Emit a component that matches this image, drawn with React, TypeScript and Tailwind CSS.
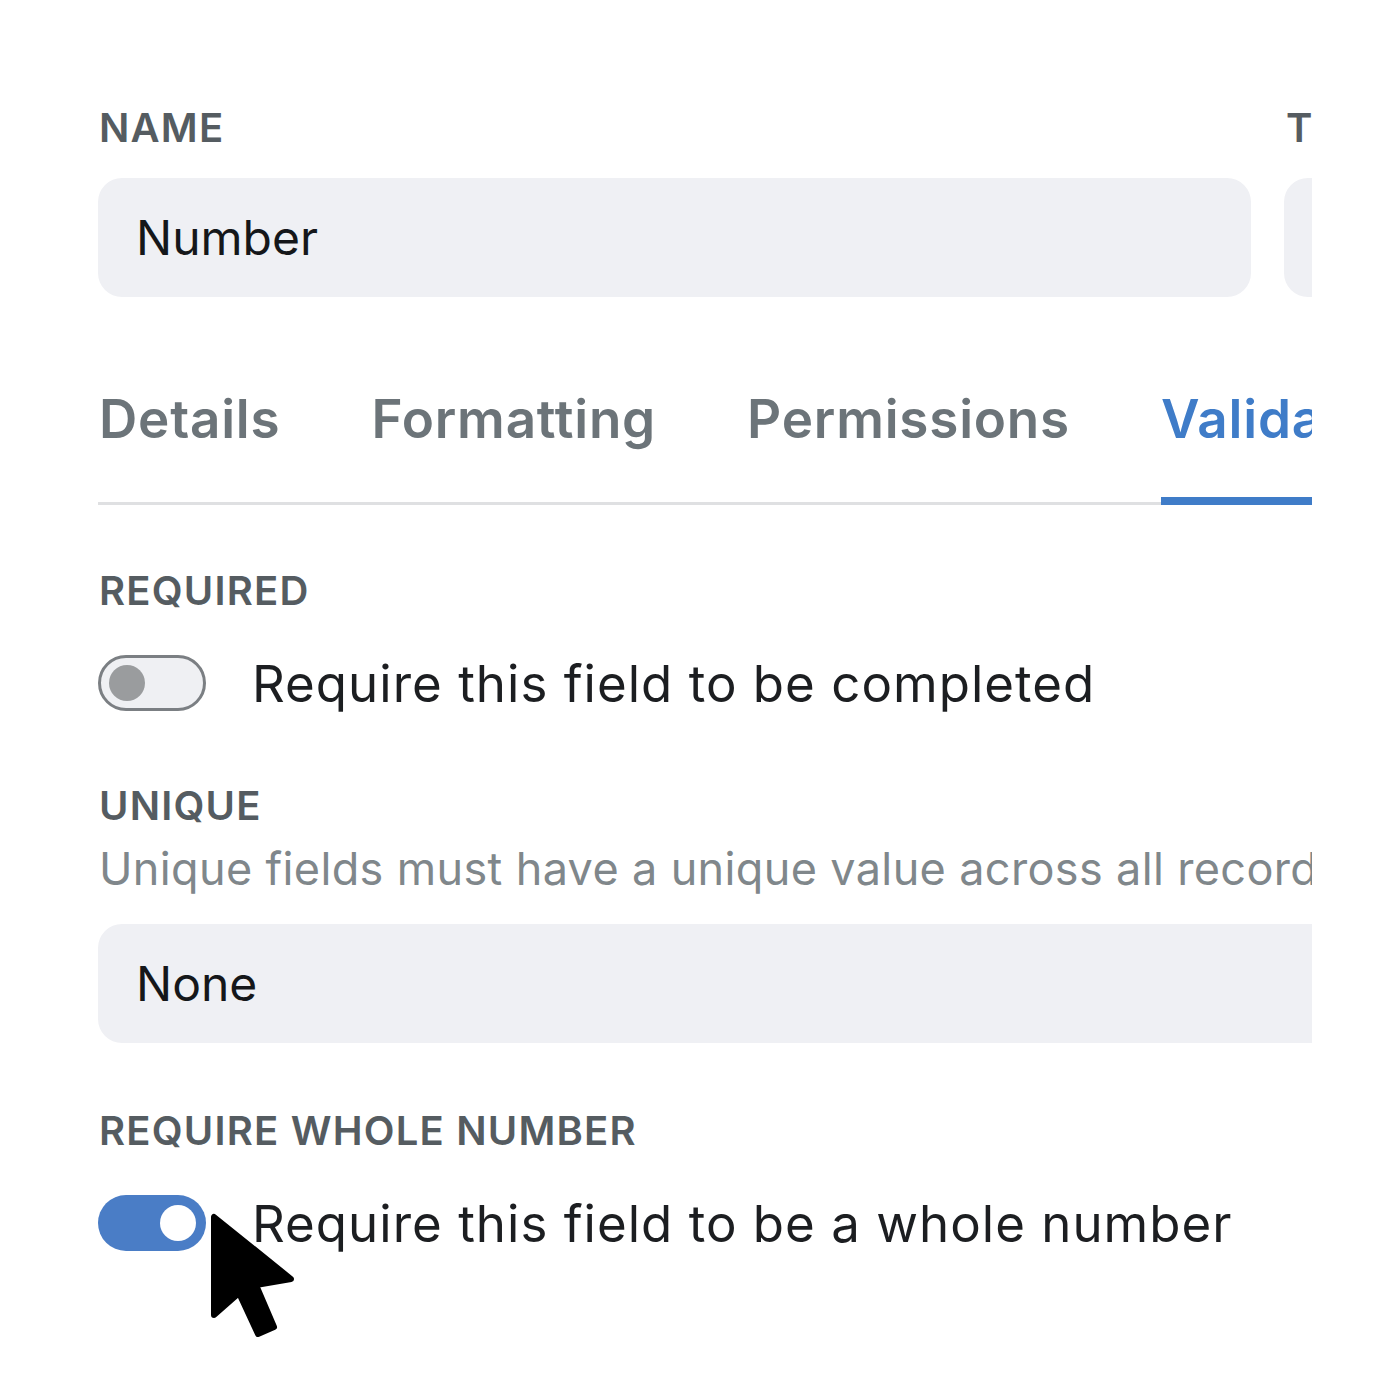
import React from 'react';

const font = { fontFamily: 'Inter, "Noto Sans", sans-serif' };

const Label = ({ children }: { children: React.ReactNode }) => (
  <div className="text-[40px] font-semibold uppercase tracking-[0.03em] leading-none text-[#555c61]">
    {children}
  </div>
);

const Toggle = ({ on }: { on: boolean }) =>
  on ? (
    <div className="flex h-[56px] w-[108px] shrink-0 items-center justify-end rounded-full bg-[#4a7dc6] pr-[10px]">
      <div className="h-[36px] w-[36px] rounded-full bg-white" />
    </div>
  ) : (
    <div className="flex h-[56px] w-[108px] shrink-0 items-center rounded-full border-[3px] border-[#7b7f83] bg-[#eff0f3] pl-[8px]">
      <div className="h-[36px] w-[36px] rounded-full bg-[#9a9c9e]" />
    </div>
  );

const Cursor = () => (
  <svg
    className="absolute left-[210px] top-[1213px]"
    width="90"
    height="128"
    viewBox="0 0 90 128"
  >
    <path
      d="M4 4 L4 102 L29 80 L48 121 L64 114 L46 72 L81 66 Z"
      fill="#000"
      stroke="#000"
      strokeWidth="6"
      strokeLinejoin="round"
    />
  </svg>
);

export default function App() {
  const tabs = ['Details', 'Formatting', 'Permissions', 'Validation'];

  return (
    <div className="relative h-[1400px] w-[1400px] bg-white" style={font}>
      <div className="absolute left-[98px] top-0 h-[1400px] w-[1214px] overflow-hidden pt-[108px]">
        <div className="w-[1700px]">
          {/* Name row */}
          <div className="flex gap-[33px]">
            <div className="w-[1153px] shrink-0">
              <div className="pl-[1px]">
                <Label>Name</Label>
              </div>
              <div className="mt-[30px] flex h-[119px] items-center rounded-[24px] bg-[#eff0f4] pl-[38px] text-[48px] text-[#15171a]">
                Number
              </div>
            </div>
            <div className="w-[400px] shrink-0">
              <div className="pl-[2px]">
                <Label>Type</Label>
              </div>
              <div className="mt-[30px] h-[119px] rounded-[24px] bg-[#eff0f4]" />
            </div>
          </div>

          {/* Tabs */}
          <div className="mt-[96px] flex w-[1214px] gap-[91px] border-b-[3px] border-[#dfe0e2] pl-[1px]">
            {tabs.map((t, i) => (
              <div
                key={t}
                className={
                  i === 3
                    ? '-mb-[3px] shrink-0 border-b-[8px] border-[#3f7cc8] pb-[51px] text-[53px] font-semibold leading-none tracking-[0.015em] text-[#3f7cc8]'
                    : 'shrink-0 pb-[56px] text-[53px] font-semibold leading-none tracking-[0.015em] text-[#6c7479]'
                }
              >
                {t}
              </div>
            ))}
          </div>

          {/* Required */}
          <div className="mt-[66px] pl-[1px]">
            <Label>Required</Label>
          </div>
          <div className="mt-[44px] flex items-center gap-[46px]">
            <Toggle on={false} />
            <div className="text-[51px] leading-none tracking-[0.02em] text-[#1c1e21]">
              Require this field to be completed
            </div>
          </div>

          {/* Unique */}
          <div className="mt-[75px] pl-[1px]">
            <Label>Unique</Label>
          </div>
          <div className="mt-[20px] whitespace-nowrap pl-[1px] text-[45px] leading-none tracking-[0.008em] text-[#80878b]">
            Unique fields must have a unique value across all records
          </div>
          <div className="mt-[33px] flex h-[119px] w-[1400px] items-center rounded-[24px] bg-[#eff0f4] pl-[38px] text-[48px] text-[#15171a]">
            None
          </div>

          {/* Whole number */}
          <div className="mt-[68px] pl-[1px]">
            <Label>Require whole number</Label>
          </div>
          <div className="mt-[44px] flex items-center gap-[46px]">
            <Toggle on={true} />
            <div className="text-[51px] leading-none tracking-[0.02em] text-[#1c1e21]">
              Require this field to be a whole number
            </div>
          </div>
        </div>
      </div>
      <Cursor />
    </div>
  );
}
